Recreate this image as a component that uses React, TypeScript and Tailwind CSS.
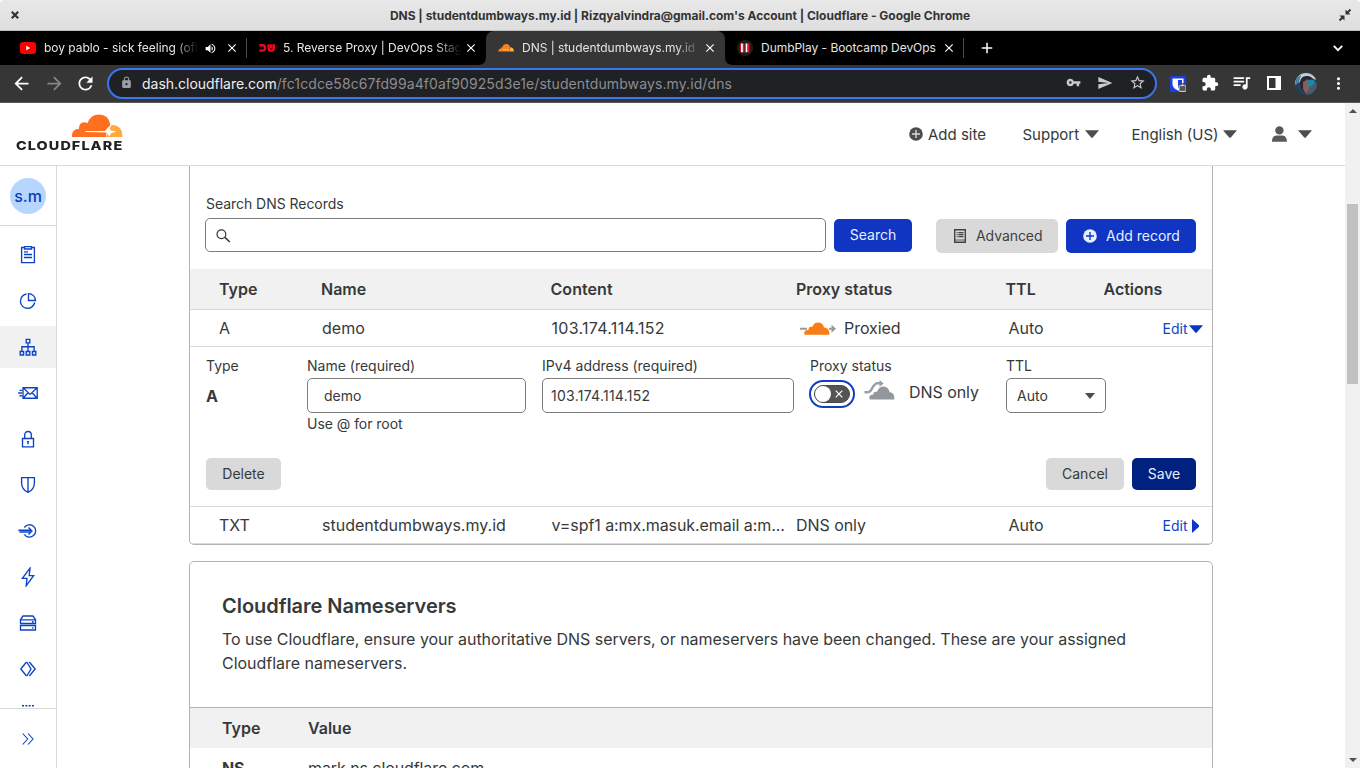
import React from "react";
import {
  MdArrowBack,
  MdArrowForward,
  MdRefresh,
  MdLock,
  MdVpnKey,
  MdSend,
  MdStarBorder,
  MdExtension,
  MdQueueMusic,
  MdMoreVert,
  MdVolumeUp,
  MdClose,
  MdAdd,
} from "react-icons/md";

const Caret = ({ className = "" }: { className?: string }) => (
  <svg width="14" height="8" viewBox="0 0 14 8" className={className} fill="currentColor">
    <path d="M0 0.3H14L8 7.2Q7 8.2 6 7.2Z" />
  </svg>
);

function TitleBar() {
  return (
    <div className="flex h-[31px] items-center justify-between rounded-t-[4px] border-b border-[#c0c0c0] bg-gradient-to-b from-[#e8e8e8] to-[#dedede] pt-px pl-[11px] pr-[9px] text-[#333]">
      <svg width="8" height="8" viewBox="0 0 8 8" stroke="#333" strokeWidth="2.2" className="mb-px">
        <path d="M0.8 0.8L7.2 7.2M7.2 0.8L0.8 7.2" />
      </svg>
      <div className="pl-[2px] text-[12px] font-bold tracking-[-0.015px]">
        DNS | studentdumbways.my.id | Rizqyalvindra@gmail.com's Account | Cloudflare - Google Chrome
      </div>
      <svg width="12" height="12" viewBox="0 0 12 12" fill="#333" stroke="#333" className="mb-[2px]">
        <path d="M6.5 0.5V5.5H11.5Z M5.5 11.5V6.5H0.5Z" strokeWidth="0" />
        <path d="M8 4L11.5 0.5M4 8L0.5 11.5" strokeWidth="2" />
      </svg>
    </div>
  );
}

type TabProps = {
  icon: React.ReactNode;
  title: string;
  active?: boolean;
  audio?: boolean;
  fade?: boolean;
  separator?: boolean;
};

function Tab({ icon, title, active, audio, fade, separator }: TabProps) {
  return (
    <div
      className={`relative flex h-[34px] w-[239px] items-center pl-3 text-[#e4e4e4] ${
        active ? "rounded-t-[8px] bg-[#363636]" : ""
      }`}
    >
      {active && (
        <>
          <svg className="absolute bottom-0 -left-2" width="8" height="8" fill="#363636">
            <path d="M8 0V8H0Q8 8 8 0Z" />
          </svg>
          <svg className="absolute bottom-0 -right-2" width="8" height="8" fill="#363636">
            <path d="M0 0V8H8Q0 8 0 0Z" />
          </svg>
        </>
      )}
      <div className="flex w-6 items-center">{icon}</div>
      <div
        className={`overflow-hidden whitespace-nowrap text-[12px] tracking-[-0.035px] ${audio ? "w-[154px]" : "w-[178px]"} ${
          fade ? "[mask-image:linear-gradient(to_right,black_calc(100%-24px),transparent)]" : ""
        }`}
      >
        {title}
      </div>
      {audio && <MdVolumeUp size={13} className="ml-[6px] text-white" />}
      <MdClose size={14} className={audio ? "ml-[8px] text-white" : "ml-[3px] text-white"} />
      {separator && <div className="absolute right-0 top-[7px] h-5 w-px bg-[#4a4a4a]" />}
    </div>
  );
}

const YouTubeIcon = () => (
  <svg width="16" height="12" viewBox="0 0 16 12">
    <rect width="16" height="12" rx="3" fill="#f00" />
    <path d="M6.2 3.7V8.3L10.2 6Z" fill="#fff" />
  </svg>
);

const DumbwaysIcon = () => (
  <svg width="16" height="8" viewBox="0 0 16 8" fill="none" stroke="#f0061c" strokeWidth="2.4">
    <path d="M0.3 1.3H3.5Q6 1.3 6 4T3.5 6.6H0.3" />
    <path d="M9.6 0.2V4Q9.6 6.7 12.2 6.7T14.9 4V0.2M12.2 0.2V4.4" />
  </svg>
);

const DumbPlayIcon = () => (
  <svg width="16" height="16" viewBox="0 0 16 16">
    <circle cx="8" cy="8" r="8" fill="#231c1c" />
    <path d="M4 3.6H6.2V12.2H4Z M8.6 3.6H10.6V12.2H8.6Z" fill="#fff" />
    <path d="M5.8 3.6H7.4V12.8L5.8 11.8Z M10.4 3.6H12.4V12.8L10.4 11.6Z" fill="#f0142a" />
    <path d="M3.2 3.6H4V12.2L3.2 11Z" fill="#f0142a" />
  </svg>
);

const CloudTabIcon = () => (
  <svg width="16" height="8" viewBox="0 0 16 8">
    <path d="M0 7.6Q0.2 5 2.7 4.6Q2.8 3.2 4.4 3.2Q5.4 0 8.2 0Q11.4 0 12 3L11 7.6Z" fill="#f6821f" />
    <path d="M11 7.6L12.3 3.3Q15.8 3.3 16 7.6Z" fill="#fbad41" />
    <path d="M4.8 5.4H11.5L10.5 6.2H5Z" fill="#ffd9b5" />
  </svg>
);

function TabStrip() {
  return (
    <div className="flex h-[34px] items-center bg-black pl-2">
      <Tab icon={<YouTubeIcon />} title="boy pablo - sick feeling (official" audio fade separator />
      <Tab icon={<DumbwaysIcon />} title="5. Reverse Proxy | DevOps Stage 2" fade />
      <Tab icon={<CloudTabIcon />} title="DNS | studentdumbways.my.id" active fade />
      <Tab icon={<DumbPlayIcon />} title="DumbPlay - Bootcamp DevOps" separator />
      <MdAdd size={18} className="ml-[14px] text-white" />
      <svg className="mr-[17px] ml-auto" width="10" height="7" viewBox="0 0 10 7" fill="none" stroke="#fff" strokeWidth="1.8">
        <path d="M0.8 0.9L5 5.2L9.2 0.9" />
      </svg>
    </div>
  );
}

const ToolCell = ({ children, className = "" }: { children: React.ReactNode; className?: string }) => (
  <div className={`flex w-8 shrink-0 items-center justify-center ${className}`}>{children}</div>
);

function Toolbar() {
  return (
    <div className="flex h-[38px] items-center border-b border-[#5a5a5a] bg-[#363636] pl-[6px] text-white">
      <ToolCell><MdArrowBack size={21} className="mr-px mb-px" /></ToolCell>
      <ToolCell className="text-[#868686]"><MdArrowForward size={21} className="mb-px" /></ToolCell>
      <ToolCell><MdRefresh size={21} className="mr-px mb-px" /></ToolCell>
      <div className="ml-[5px] flex h-[31px] w-[1050px] items-center rounded-full border-2 border-[#3b76ee] bg-[#202124] text-[#c9cacc]">
        <MdLock size={13} className="mb-[2px] ml-[11px] text-[#9aa0a6]" />
        <div className="ml-[9px] text-[14px] tracking-[0.1px] whitespace-nowrap text-[#8b8d90]">
          <span className="tracking-[-0.02px] text-[#eee]">dash.cloudflare.com</span>/fc1cdce58c67fd99a4f0af90925d3e1e/studentdumbways.my.id/dns
        </div>
        <div className="mr-[2px] ml-auto flex items-center">
          <ToolCell><MdVpnKey size={15} className="mb-[2px]" /></ToolCell>
          <ToolCell><MdSend size={16} className="mb-[2px]" /></ToolCell>
          <ToolCell><MdStarBorder size={17} className="mb-[2px]" /></ToolCell>
        </div>
      </div>
      <ToolCell className="ml-[5px]">
        <svg width="16" height="16" viewBox="0 0 16 16">
          <rect width="16" height="16" rx="1.5" fill="#1c3fe0" />
          <path d="M2.5 2.5H13.5V8Q13.5 12 8 14.5Q2.5 12 2.5 8Z" fill="#fff" />
          <path d="M8 4H12V8Q11.5 10.5 8 12.5Z" fill="#1c3fe0" />
          <rect x="9" y="9.6" width="7" height="5.8" rx="1" fill="#555" stroke="#fff" strokeWidth="0.8" />
          <path d="M10.8 9.5V8.6Q12.5 6.5 14.2 8.6V9.5" fill="none" stroke="#555" strokeWidth="1.2" />
        </svg>
      </ToolCell>
      <ToolCell><MdExtension size={18} className="mb-[2px]" /></ToolCell>
      <ToolCell><MdQueueMusic size={21} className="mr-px mb-[3px]" /></ToolCell>
      <ToolCell>
        <svg width="14" height="14" viewBox="0 0 14 14" className="mb-px">
          <path fillRule="evenodd" d="M0 0H14V14H0ZM2 2V12H8.5V2Z" fill="#fff" />
        </svg>
      </ToolCell>
      <ToolCell>
        <svg width="22" height="22" viewBox="0 0 22 22">
          <defs><clipPath id="avatar"><circle cx="11" cy="11" r="11" /></clipPath></defs>
          <g clipPath="url(#avatar)">
            <rect width="22" height="22" fill="#27405a" />
            <path d="M0 0H22V7L15 5L9 4L5 9L0 11Z" fill="#b9cfdc" />
            <path d="M5 9Q6 2 13 3Q19 4 19 10L17 19L11 21L6 15Z" fill="#2b2531" />
            <path d="M8 9L13 6L15 16L11 21L8 16Z" fill="#8c5d54" />
            <path d="M12 8Q16 5 20 8L19 13Q15 16 12 12Z" fill="#1c87a7" />
            <path d="M15 14L22 9V22H11Z" fill="#4a5a68" />
            <path d="M1 5L6 2L4 9L0 13Z" fill="#4a7f9c" />
          </g>
        </svg>
      </ToolCell>
      <ToolCell><MdMoreVert size={19} /></ToolCell>
    </div>
  );
}

const PlusDisc = ({ cross }: { cross: string }) => (
  <svg width="14" height="14" viewBox="0 0 14 14">
    <circle cx="7" cy="7" r="6.8" fill="currentColor" />
    <path d="M7 3V11M3 7H11" stroke={cross} strokeWidth="1.4" />
  </svg>
);

function Header() {
  return (
    <header className="flex h-[63px] shrink-0 items-center border-b border-[#d9d9d9] bg-white pl-[17px] text-[#36393a]">
      <div className="flex w-[892px] flex-col pb-[3px]">
        <svg className="ml-[55px]" width="51" height="24" viewBox="0 0 51 24">
          <path d="M0 23Q-0.6 15 7 15Q6.8 8.3 12 8.2Q14 8.2 15.6 9.3Q18.3 0.4 27 0.4Q36.5 0.4 38.4 10.5L34.8 17L33.8 23Z" fill="#ff6f20" />
          <path d="M39.5 11Q50.6 11 50.4 23H34L36 17.5Z" fill="#ffa940" />
          <path d="M13.5 17H33L36.8 12.6L38.7 16.4L44.5 17.5L39.5 19L37.2 22.2L34.5 18.5L13.5 18Z" fill="#fff" />
        </svg>
        <div className="mt-[2px] -ml-px h-3 origin-left scale-x-[1.16] text-[12.4px] leading-3 font-extrabold tracking-[0.95px] text-[#222]">
          CLOUDFLARE
        </div>
      </div>
      <div className="flex w-[113px] items-center gap-[5px] text-[#4d4d4d]">
        <PlusDisc cross="#ddd" />
        <span className="pt-[2px] text-[15px] text-[#36393a]">Add site</span>
      </div>
      <div className="flex w-[109px] items-center gap-[5.5px] pl-[0.5px] text-[15px]">
        <span className="pt-[2px]">Support</span>
        <Caret className="text-[#4d4d4d]" />
      </div>
      <div className="flex w-[140px] items-center gap-[4.5px] pl-[0.5px] text-[15px]">
        <span className="pt-[2px]">English (US)</span>
        <Caret className="text-[#4d4d4d]" />
      </div>
      <div className="flex items-center gap-[11px] text-[#595959]">
        <svg width="16" height="16" viewBox="0 0 16 16" fill="currentColor">
          <circle cx="8.4" cy="4.4" r="4.2" />
          <path d="M0.9 15.8Q0.9 9.6 5.4 9.4H11.4Q15.9 9.6 15.9 15.8Z" />
        </svg>
        <Caret className="text-[#4d4d4d]" />
      </div>
    </header>
  );
}

const iconPaths: { name: string; body: React.ReactNode }[] = [
  {
    name: "overview",
    body: <path d="M6 2.5H3.6V17.6H16.4V2.5H14M6.5 1.6H13.5V4H6.5ZM6 6.8H10M6 9.5H14M6 12.5H14" />,
  },
  {
    name: "analytics",
    body: <path d="M8.5 3A7.2 7.2 0 1 0 16.7 11.5M10.5 2.6V9.5H17.5A7 7 0 0 0 10.5 2.6Z" />,
  },
  {
    name: "dns",
    body: <path d="M8.2 2.3H11.8V5.9H8.2ZM10 5.9V14.5M3.9 14.5V9.7H16.1V14.5M2.2 14.5H5.6V18H2.2ZM8.2 14.5H11.8V18H8.2ZM14.4 14.5H17.8V18H14.4Z" />,
  },
  {
    name: "email",
    body: <path d="M5 4.7H19.2V15.2H5ZM5.4 5L12.1 11.4L18.8 5M5.4 15L10 9.8M18.8 15L14.2 9.8M1.5 7.3H4M0.2 10H4M1.5 12.7H4" />,
  },
  {
    name: "ssl",
    body: <path d="M4.5 9.5H15.5V17.8H4.5ZM6.7 9.5V5.8A3.3 3.3 0 0 1 13.3 5.8V9.5M10 12V15.3M9 12.6H11" />,
  },
  {
    name: "security",
    body: <path d="M3.6 2.6H16.4V8.2Q16.2 14.7 10 17.3Q3.8 14.7 3.6 8.2ZM10 2.6V17.3" />,
  },
  {
    name: "access",
    body: <path d="M6.3 6.5A6.2 6.2 0 1 1 6.3 13.4M0.4 9.2H13.5M1.4 11H13.5M10.5 6.6L14 10.1L10.5 13.5" />,
  },
  {
    name: "speed",
    body: <path d="M12 1.2L4.4 11.3H9L8.2 18.8L15.6 8.6H11.2Z" />,
  },
  {
    name: "caching",
    body: <path d="M2.5 6.7L5 3H15L17.5 6.7V10.5H2.5ZM2.5 6.9H17.5M2.5 12.5H17.5V17H2.5ZM14 8.7H15.5M14 14.8H15.5" />,
  },
  {
    name: "workers",
    body: <path d="M8.5 3L2.8 10L8.5 17M8.8 3L13 10L8.8 17M11.3 3L17.2 10L11.3 17" />,
  },
  {
    name: "rules",
    body: <path d="M4 0.5H16" strokeDasharray="2 1.3" strokeWidth="1.8" />,
  },
];

function Sidebar() {
  return (
    <aside className="flex w-[57px] shrink-0 flex-col border-r border-[#d9d9d9] bg-white">
      <div className="flex h-[60px] shrink-0 items-center justify-center border-b border-[#d9d9d9]">
        <div className="flex h-9 w-9 items-center justify-center rounded-full bg-[#b6d6ff] text-[16px] font-medium text-[#0a3db5]">s.m</div>
      </div>
      <nav className="flex min-h-0 flex-1 flex-col gap-1 overflow-hidden pt-2">
        {iconPaths.map((icon) => (
          <a
            key={icon.name}
            className={`flex h-[42px] shrink-0 items-center justify-center ${icon.name === "dns" ? "bg-[#f1f1f1]" : ""}`}
          >
            <svg width="20" height="20" viewBox="0 0 20 20" fill="none" stroke="#0b43c6" strokeWidth="1.35">
              {icon.body}
            </svg>
          </a>
        ))}
      </nav>
      <div className="flex h-[60px] shrink-0 items-center justify-center border-t border-[#d9d9d9]">
        <svg width="12" height="12" viewBox="0 0 12 12" fill="none" stroke="#0b43c6" strokeWidth="1.1">
          <path d="M0.7 0.5L5.7 6L0.7 11.5M6 0.5L11 6L6 11.5" />
        </svg>
      </div>
    </aside>
  );
}

function SearchBar() {
  return (
    <div className="h-[103px] px-[15px] pt-[28px]">
      <div className="pl-px text-[14px] leading-5 tracking-[-0.04px]">Search DNS Records</div>
      <div className="flex pt-1">
        <div className="flex h-[34px] w-[621px] items-center rounded-[5px] border border-[#7c7c7c] pl-[10px]">
          <svg width="15" height="14" viewBox="0 0 15 14" fill="none" stroke="#36393a" className="mt-px">
            <circle cx="5.4" cy="5.2" r="4.4" strokeWidth="1.2" />
            <path d="M8.6 8.2L13.8 13" strokeWidth="1.6" />
          </svg>
        </div>
        <button className="mt-px ml-2 h-[33px] w-[78px] rounded-[5px] bg-[#0f35c2] pb-[2px] text-[14px] text-[#e6efff]">Search</button>
        <button className="mt-px ml-6 flex h-[34px] w-[122px] items-center rounded-[5px] bg-[#d9d9d9] pl-[18px] text-[14px] text-[#404242]">
          <svg width="12" height="14" viewBox="0 0 12 14" fill="none" stroke="#404242">
            <path d="M0.7 0.7H11.3V13.3H0.7Z" strokeWidth="1.4" />
            <path d="M2.6 3.6H3.6M4.4 3.6H9.5M2.6 5.6H3.6M4.4 5.6H9.5M2.6 7.6H3.6M4.4 7.6H9.5" strokeWidth="1.1" />
            <path d="M1 11H11" strokeWidth="0.8" />
          </svg>
          <span className="ml-[10px] pb-[2px] tracking-[-0.06px]">Advanced</span>
        </button>
        <button className="mt-px ml-2 flex h-[34px] w-[130px] items-center rounded-[5px] bg-[#0f35c2] pl-[17px] text-[14px] text-[#e6efff]">
          <PlusDisc cross="#0f35c2" />
          <span className="ml-[9px] pb-[2px]">Add record</span>
        </button>
      </div>
    </div>
  );
}

const ProxiedCloud = () => (
  <svg width="36" height="13" viewBox="0 0 36 13">
    <path d="M0 6.8H7M29 6.8H34" stroke="#999" strokeWidth="2" />
    <path d="M31.5 2.8L36 6.8L31.5 10.8Z" fill="#999" />
    <path d="M4.5 12.8Q3 8.2 8.5 8Q8.5 4.2 12.3 4.9Q14 0.4 18.5 0.5Q23 0.7 24 5.5Q29.6 5.6 29.4 12.8Z" fill="#fb7c14" />
  </svg>
);

const BypassCloud = () => (
  <svg width="31" height="21" viewBox="0 0 31 21">
    <path d="M0.5 12.2H4Q6.5 12 8 8.5T12.5 3.2H16.5" fill="none" stroke="#9aa0a4" strokeWidth="2.4" />
    <path d="M15.5 0L19.8 3.4L15.5 6.8Z" fill="#9aa0a4" />
    <path d="M5.8 19.6Q3.8 14.8 9.3 14.4Q9.5 11.2 13 11.8Q15 6.3 19.7 6.4Q24.7 6.7 25.6 12.3Q30.8 12.6 30.4 19.6Z" fill="#92979b" />
  </svg>
);

function FormField({ label, className, children }: { label: string; className: string; children: React.ReactNode }) {
  return (
    <div className={`shrink-0 text-[14px] ${className}`}>
      <div className="h-[22px] leading-5">{label}</div>
      {children}
    </div>
  );
}

function RecordEditor() {
  return (
    <div className="h-[160px] border-b border-[#d9d9d9] pr-4 pl-4">
      <div className="flex h-[111px] pt-[9px]">
        <FormField label="Type" className="w-[101px]">
          <div className="flex h-[35px] items-center text-[16px] font-bold">A</div>
        </FormField>
        <FormField label="Name (required)" className="w-[235px]">
          <div className="flex h-[35px] w-[219px] items-center rounded-[5px] border border-[#7c7c7c] pl-[16px]">demo</div>
          <div className="h-[22px] pt-px leading-5 tracking-[-0.04px]">Use @ for root</div>
        </FormField>
        <FormField label="IPv4 address (required)" className="w-[268px]">
          <div className="flex h-[35px] w-[252px] items-center rounded-[5px] border border-[#7c7c7c] pl-[8px] tracking-[0.26px]">103.174.114.152</div>
        </FormField>
        <FormField label="Proxy status" className="w-[196px]">
          <div className="flex">
            <div className="mt-[2px] -ml-px flex h-7 w-[46px] items-center justify-center rounded-full border-2 border-[#0f3fc4] bg-white">
              <div className="flex h-[18px] w-9 items-center justify-between rounded-full border border-[#4a4a4a] bg-[#545454] pr-[6px]">
                <div className="h-4 w-4 rounded-full bg-white" />
                <svg width="8" height="8" viewBox="0 0 8 8" stroke="#fff" strokeWidth="1.2">
                  <path d="M0.7 0.7L7.3 7.3M7.3 0.7L0.7 7.3" />
                </svg>
              </div>
            </div>
            <div className="ml-[9px] pt-[2px]"><BypassCloud /></div>
            <div className="ml-[14px] text-[16px] leading-7 tracking-[-0.05px] whitespace-nowrap">DNS only</div>
          </div>
        </FormField>
        <FormField label="TTL" className="w-[100px]">
          <div className="flex h-[35px] items-center justify-between rounded-[5px] border border-[#7c7c7c] pr-[10px] pl-[10px]">
            Auto
            <svg width="10" height="6" fill="#4d4d4d" className="mt-px"><path d="M0 0H10L5 6Z" /></svg>
          </div>
        </FormField>
      </div>
      <div className="flex text-[14px]">
        <button className="h-8 w-[75px] rounded-[5px] bg-[#d9d9d9] pb-[2px]">Delete</button>
        <button className="ml-auto h-8 w-[78px] rounded-[5px] bg-[#d9d9d9] pb-[2px]">Cancel</button>
        <button className="ml-2 h-8 w-16 rounded-[5px] bg-[#00217f] pb-[2px] text-[#e6efff]">Save</button>
      </div>
    </div>
  );
}

function RecordRow({ type, name, content, open, children }: { type: string; name: string; content: string; open?: boolean; children: React.ReactNode }) {
  return (
    <div className="grid h-[37px] grid-cols-[103px_229.5px_244.5px_212.5px_1fr] items-center border-b border-[#d9d9d9] pl-[29px] text-[16px]">
      <div>{type}</div>
      <div>{name}</div>
      <div className={open ? "tracking-[0.29px]" : "tracking-[-0.07px]"}>{content}</div>
      <div className="flex items-center tracking-[-0.05px]">{children}</div>
      <div className="flex items-center">
        Auto
        <span className="ml-auto pt-px text-[14px] text-[#0b43c6]">Edit</span>
        {open ? (
          <Caret className="mt-px mr-[9px] ml-[1.5px] text-[#0b35c6]" />
        ) : (
          <svg className="mt-px mr-[12px] ml-[4.5px]" width="8" height="14" fill="#0b35c6"><path d="M0 0L7 6.2V7.8L0 14Z" /></svg>
        )}
      </div>
    </div>
  );
}

function Main() {
  return (
    <main className="flex flex-1 flex-col overflow-hidden bg-white pl-[132px] text-[#36393a]">
      <section className="h-[379px] w-[1024px] shrink-0 overflow-hidden rounded-b-[5px] border border-t-0 border-[#b3b3b3]">
        <SearchBar />
        <div className="grid h-[41px] grid-cols-[102px_229.5px_245.5px_209.5px_98px_1fr] items-center border-b border-[#d9d9d9] bg-[#f1f1f1] pl-[29px] text-[16px] font-semibold">
          <div>Type</div>
          <div>Name</div>
          <div className="tracking-[0.06px]">Content</div>
          <div>Proxy status</div>
          <div>TTL</div>
          <div>Actions</div>
        </div>
        <RecordRow type="A" name="demo" content="103.174.114.152" open>
          <span className="mr-2 ml-1 pt-px"><ProxiedCloud /></span>Proxied
        </RecordRow>
        <RecordEditor />
        <RecordRow type="TXT" name="studentdumbways.my.id" content="v=spf1 a:mx.masuk.email a:m...">
          DNS only
        </RecordRow>
      </section>
      <section className="mt-4 h-[400px] w-[1024px] shrink-0 rounded-[5px] border border-[#b3b3b3]">
        <div className="h-[146px] border-b border-[#b3b3b3] pt-[29px] pr-16 pl-8">
          <h2 className="text-[20px] leading-[30px] font-semibold tracking-[-0.04px]">Cloudflare Nameservers</h2>
          <p className="mt-[6px] text-[16px] leading-6 tracking-[-0.026px]">
            To use Cloudflare, ensure your authoritative DNS servers, or nameservers have been changed. These are your assigned Cloudflare nameservers.
          </p>
        </div>
        <div className="grid h-10 grid-cols-[86px_1fr] items-center bg-[#f1f1f1] pl-8 text-[16px] font-semibold">
          <div>Type</div>
          <div>Value</div>
        </div>
        <div className="grid h-10 grid-cols-[86px_1fr] items-center pl-8 text-[16px]">
          <div className="font-bold tracking-[-0.3px]">NS</div>
          <div className="tracking-[-0.1px]">mark.ns.cloudflare.com</div>
        </div>
      </section>
    </main>
  );
}

function Scrollbar() {
  return (
    <div className="flex w-[15px] shrink-0 flex-col items-center bg-[#f1f1f1]">
      <svg className="mt-[6px]" width="8" height="4" fill="#505050"><path d="M4 0L8 4H0Z" /></svg>
      <div className="mt-[91px] h-[180px] w-[11px] bg-[#c1c1c1]" />
      <svg className="mt-auto mb-[6px]" width="8" height="4" fill="#505050"><path d="M0 0H8L4 4Z" /></svg>
    </div>
  );
}

export default function App() {
  return (
    <div className="h-[768px] w-[1360px] overflow-hidden bg-white font-['Inter',sans-serif]">
      <TitleBar />
      <TabStrip />
      <Toolbar />
      <div className="flex h-[665px]">
        <div className="flex min-w-0 flex-1 flex-col">
          <Header />
          <div className="flex min-h-0 flex-1">
            <Sidebar />
            <Main />
          </div>
        </div>
        <Scrollbar />
      </div>
    </div>
  );
}
